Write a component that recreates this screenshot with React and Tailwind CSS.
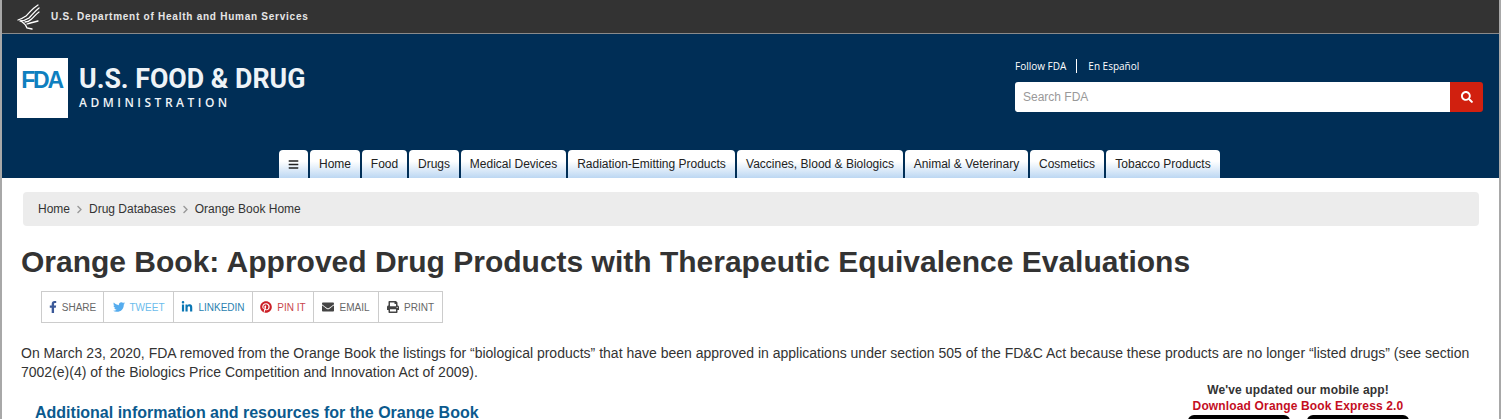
import React from "react";
import {
  FaBars,
  FaChevronRight,
  FaEnvelope,
  FaFacebookF,
  FaLinkedinIn,
  FaPinterest,
  FaPrint,
  FaSearch,
  FaTwitter,
} from "react-icons/fa";

const tabs = [
  { label: "Home", width: "w-[50px]" },
  { label: "Food", width: "w-[45px]" },
  { label: "Drugs", width: "w-[50px]" },
  { label: "Medical Devices", width: "w-[105px]" },
  { label: "Radiation-Emitting Products", width: "w-[167px]" },
  { label: "Vaccines, Blood & Biologics", width: "w-[166px]" },
  { label: "Animal & Veterinary", width: "w-[123px]" },
  { label: "Cosmetics", width: "w-[74px]" },
  { label: "Tobacco Products", width: "w-[114px]" },
];

const shares = [
  { label: "SHARE", Icon: FaFacebookF, width: "w-[61px]", gap: "gap-[3px] pr-[2px]", text: "text-[#666]", icon: "text-[#3b5998]" },
  { label: "TWEET", Icon: FaTwitter, width: "w-[70px]", gap: "gap-[5px]", text: "text-[#6cbcec]", icon: "text-[#55acee]" },
  { label: "LINKEDIN", Icon: FaLinkedinIn, width: "w-[79px]", gap: "gap-[5px]", text: "text-[#2a7fb0]", icon: "text-[#0976b4]" },
  { label: "PIN IT", Icon: FaPinterest, width: "w-[61px]", gap: "gap-[5px]", text: "text-[#c9454b]", icon: "text-[#cb2027]" },
  { label: "EMAIL", Icon: FaEnvelope, width: "w-[65px]", gap: "gap-[5px]", text: "text-[#666]", icon: "text-[#444]" },
  { label: "PRINT", Icon: FaPrint, width: "w-[64px]", gap: "gap-[5px]", text: "text-[#666]", icon: "text-[#444]" },
];

const HhsEagle = () => (
  <svg viewBox="0 0 26 26" className="w-[26px] h-[26px]" fill="none" stroke="white" strokeWidth="1.3" strokeLinecap="round">
    <path d="M21 1 C16 4 12 9 9 12 C6 14 4 15 1 16" />
    <path d="M22 4 C18 7 15 11 12 14 C9 16 6 17 3 17" />
    <path d="M22 8 C19 10 17 13 14 15.5 C12 17.5 10 18 8 18" />
    <path d="M4 17 C7 19 9 21 10 24 L15 25" />
    <path d="M10 20 C13 19 17 18 21 17" />
  </svg>
);

export default function App() {
  return (
    <div className="w-[1501px] h-[419px] overflow-hidden bg-white border-x-2 border-[#a8a8a8] font-['Liberation_Sans',Arial,sans-serif] text-[#333]">
      <div className="h-[34px] bg-[#333] border-b border-[#8a8a8a] flex items-center pl-[15px] gap-[8px]">
        <HhsEagle />
        <span className="text-[10px] font-bold text-[#e6e6e6] tracking-[0.75px]">
          U.S. Department of Health and Human Services
        </span>
      </div>

      <header className="h-[144px] bg-[#002e56] flex flex-col">
        <div className="flex justify-between h-[116px]">
          <div className="flex items-start pt-[24px] pl-[15px]">
            <div className="w-[51px] h-[60px] bg-white flex justify-center pt-[9px]">
              <span className="text-[23px] leading-[26px] font-bold tracking-[-2.2px] text-[#0f7fbf] pr-[2px]">FDA</span>
            </div>
            <div className="ml-[11px] pt-[5px]">
              <div className="font-['Roboto',sans-serif] font-bold text-[28px] leading-[32px] text-[#eef3f7] origin-left scale-x-[0.955]">
                U.S. FOOD &amp; DRUG
              </div>
              <div className="font-['Open_Sans',sans-serif] text-[12px] leading-[16px] tracking-[3.5px] text-[#eef3f7] font-semibold">
                ADMINISTRATION
              </div>
            </div>
          </div>

          <div className="w-[468px] mr-[16px] pt-[25px]">
            <div className="flex items-center text-[10px] text-white h-[14px] font-['Open_Sans',sans-serif]">
              <span>Follow FDA</span>
              <span className="w-px h-[14px] bg-white ml-[10px] mr-[11px]"></span>
              <span>En Español</span>
            </div>
            <div className="flex h-[30px] mt-[9px]">
              <div className="flex-1 bg-white rounded-l-[3px] flex items-center pl-[8px] text-[12px] text-[#999]">
                Search FDA
              </div>
              <div className="w-[33px] bg-[#d1200f] rounded-r-[3px] flex items-center justify-center text-white text-[12px]">
                <FaSearch />
              </div>
            </div>
          </div>
        </div>

        <nav className="h-[28px] flex pl-[277px] gap-[2px]">
          <div className="w-[29px] rounded-t-[4px] bg-gradient-to-b from-white from-40% to-[#bcd7f2] flex items-center justify-center text-[#222] text-[11px]">
            <FaBars />
          </div>
          {tabs.map((tab) => (
            <div
              key={tab.label}
              className={`${tab.width} rounded-t-[4px] bg-gradient-to-b from-white from-40% to-[#bcd7f2] flex items-center justify-center text-[12px] text-[#222] whitespace-nowrap`}
            >
              {tab.label}
            </div>
          ))}
        </nav>
      </header>

      <main>
        <div className="mt-[14px] ml-[21px] mr-[20px] h-[34px] bg-[#ececec] rounded-[4px] flex items-center pl-[15px] text-[12px] text-[#333]">
          <span>Home</span>
          <FaChevronRight className="text-[#999] text-[9px] mx-[5px]" />
          <span>Drug Databases</span>
          <FaChevronRight className="text-[#999] text-[9px] mx-[5px]" />
          <span>Orange Book Home</span>
        </div>

        <h1 className="mt-[18px] ml-[19px] text-[30px] leading-[36px] font-bold text-[#333] whitespace-nowrap">
          Orange Book: Approved Drug Products with Therapeutic Equivalence Evaluations
        </h1>

        <div className="mt-[11px] ml-[39px] flex w-fit h-[32px] border border-[#ccc]">
          {shares.map(({ label, Icon, width, gap, text, icon }, i) => (
            <div
              key={label}
              className={`${width} ${gap} ${i > 0 ? "border-l border-[#ccc]" : ""} flex items-center justify-center text-[10px] ${text}`}
            >
              <Icon className={`text-[12px] ${icon}`} />
              <span>{label}</span>
            </div>
          ))}
        </div>

        <p className="mt-[21px] ml-[19px] mr-[20px] text-[14px] leading-[19px] text-[#333]">
          On March 23, 2020, FDA removed from the Orange Book the listings for “biological products” that have been approved in applications under section 505 of the FD&amp;C Act because these products are no longer “listed drugs” (see section 7002(e)(4) of the Biologics Price Competition and Innovation Act of 2009).
        </p>

        <div className="flex justify-between">
          <h2 className="mt-[21px] ml-[33px] text-[16px] leading-[20px] font-bold text-[#0b5a8e]">
            Additional information and resources for the Orange Book
          </h2>
          <div className="w-[220px] mr-[91px] flex flex-col items-center text-[12px] leading-[16px] tracking-[0.15px] font-bold">
            <div className="text-[#333]">We've updated our mobile app!</div>
            <div className="text-[#c40e1f]">Download Orange Book Express 2.0</div>
            <div className="flex gap-[17px] mt-[1px]">
              <div className="w-[102px] h-[20px] bg-black rounded-t-[6px]"></div>
              <div className="w-[102px] h-[20px] bg-black rounded-t-[6px]"></div>
            </div>
          </div>
        </div>
      </main>
    </div>
  );
}
